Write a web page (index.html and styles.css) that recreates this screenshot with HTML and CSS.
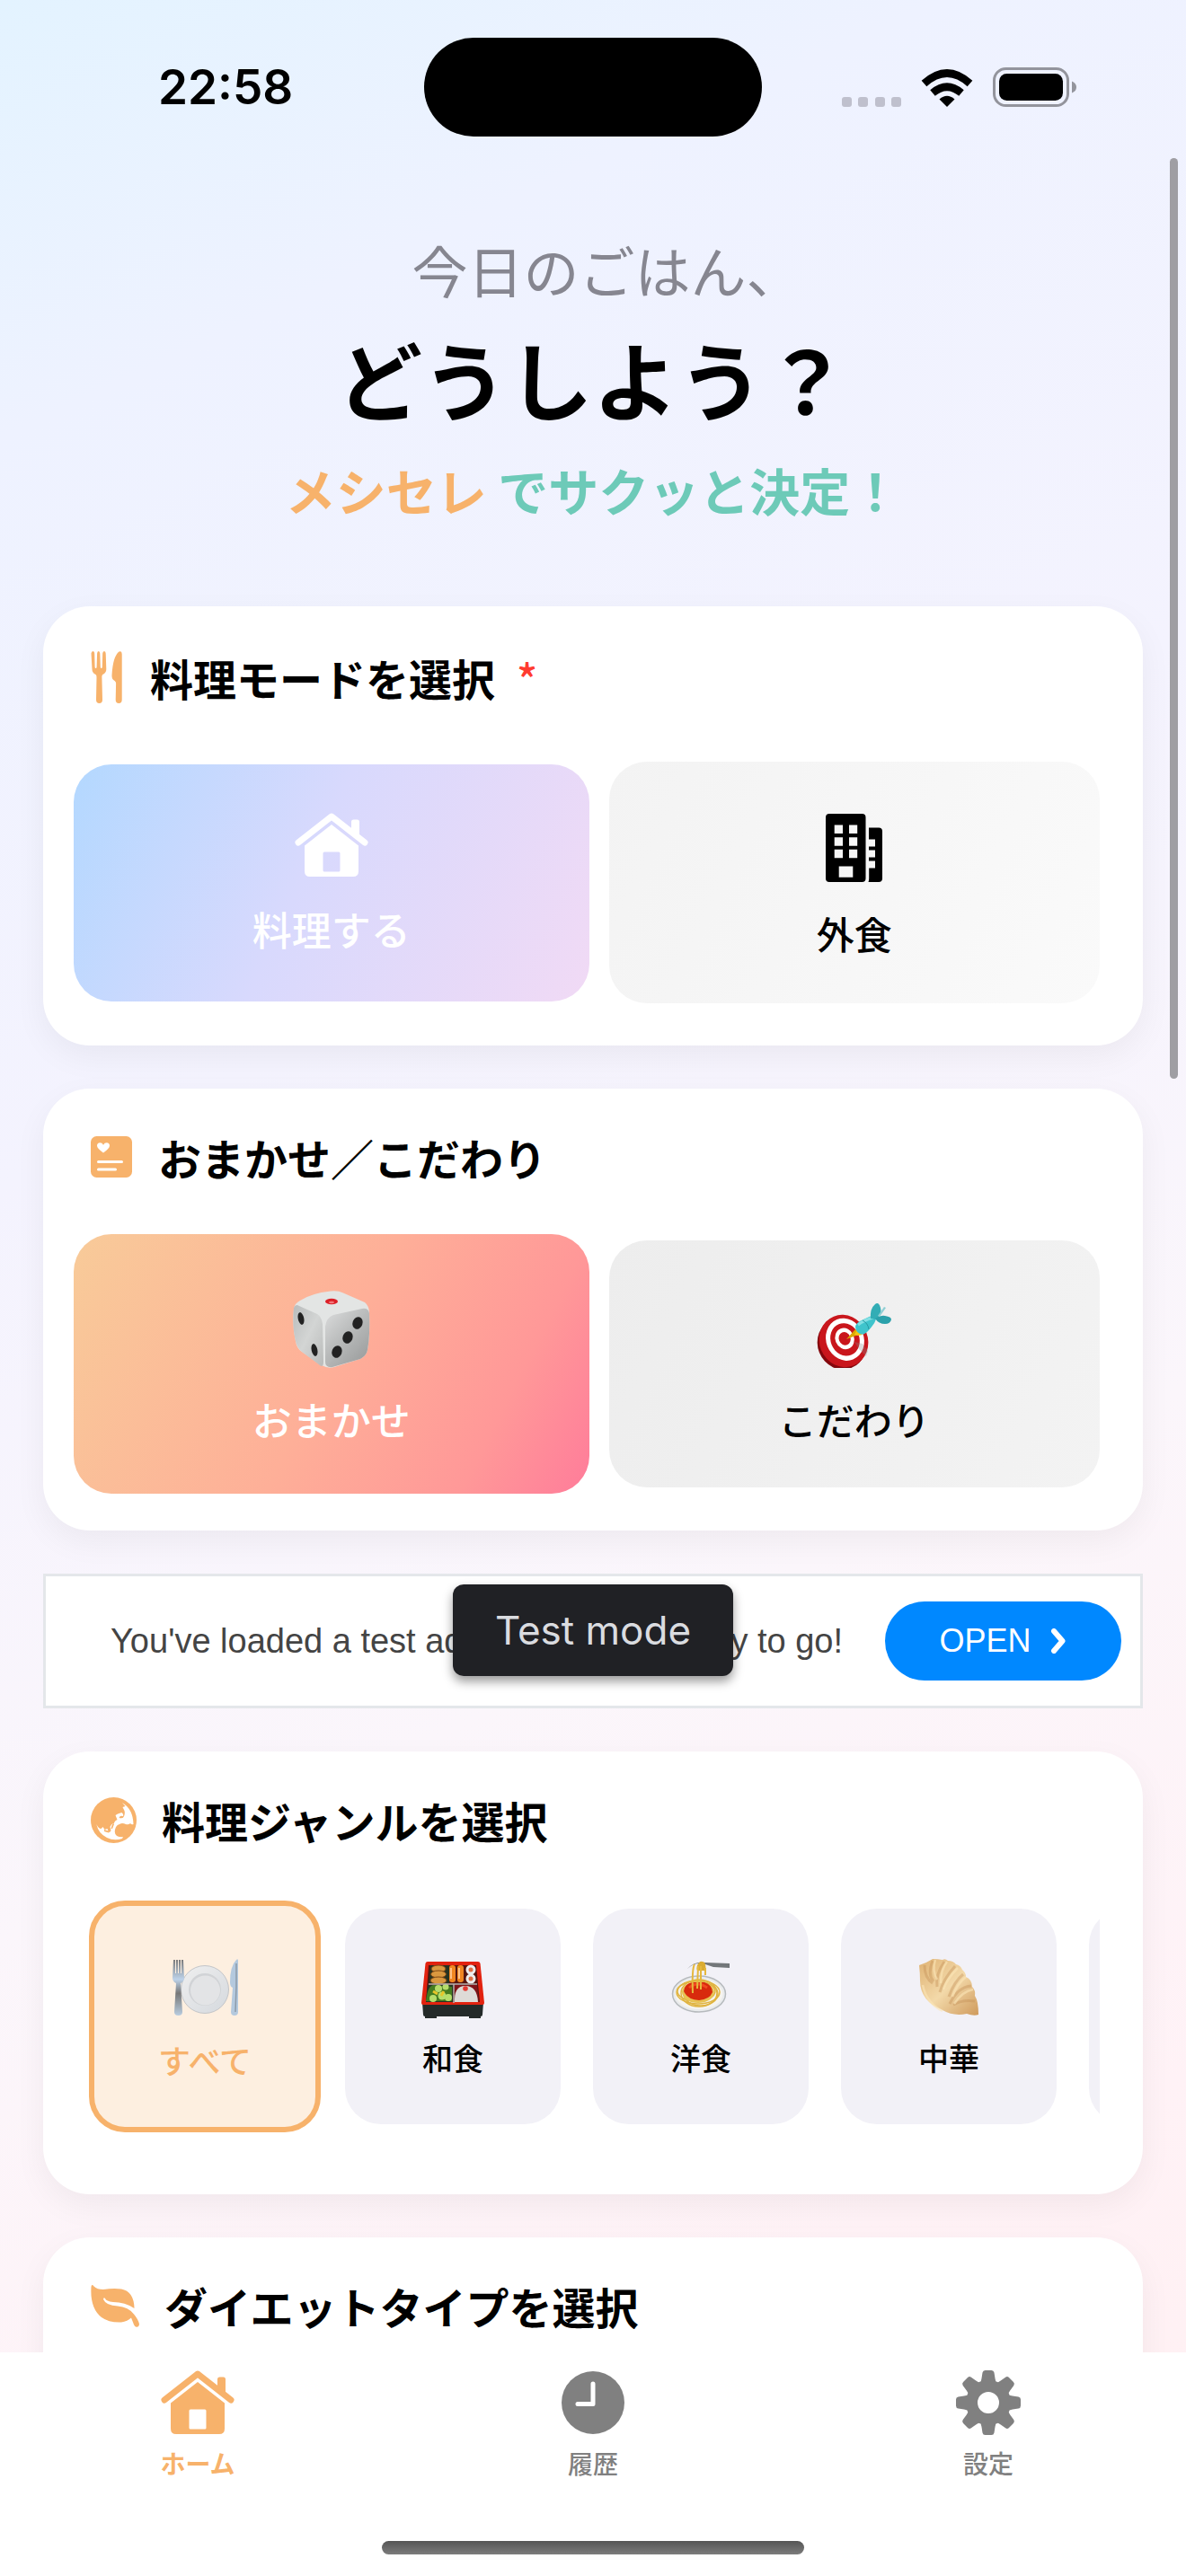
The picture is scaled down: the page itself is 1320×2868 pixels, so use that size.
FILE: index.html
```html
<!DOCTYPE html>
<html lang="ja">
<head>
<meta charset="utf-8">
<meta name="viewport" content="width=device-width, initial-scale=1">
<title>メシセレ</title>
<link rel="stylesheet" href="styles.css">
</head>
<body>
<svg class="defs" width="0" height="0" aria-hidden="true">
  <symbol id="house" viewBox="0 0 82 72">
    <path d="M4 33 L41 4 L78 33" fill="none" stroke="currentColor" stroke-width="7" stroke-linecap="round" stroke-linejoin="round"/>
    <path d="M63 20V10q0-2.500 2.500-2.500h4q2.500 0 2.500 2.500V27z" fill="currentColor"/>
    <path fill="currentColor" fill-rule="evenodd" d="M41 13 L71 36.500V65q0 6-6 6H17q-6 0-6-6V36.500zM33 43.500q-1.500 0-1.500 1.500v19q0 1.500 1.500 1.500h16q1.500 0 1.500-1.500V45q0-1.500-1.500-1.500z"/>
  </symbol>
</svg>

<div class="screen">
  <div class="status">
    <div class="status-time">22:58</div>
    <div class="island"></div>
    <div class="status-icons">
      <svg class="signal" width="66" height="11" viewBox="0 0 66 11"><g fill="#bfc0cd"><rect width="11" height="11" rx="3"/><rect x="18" width="11" height="11" rx="3"/><rect x="37" width="11" height="11" rx="3"/><rect x="55" width="11" height="11" rx="3"/></g></svg>
      <svg width="58" height="43" viewBox="0 0 58 43"><path d="M29 43l-8.500-8.500q8.500-7.500 17 0z"/><path d="M13 27.500q16-13.500 32 0M3.500 17Q29-6 54.500 17" fill="none" stroke="#000" stroke-width="8.500"/></svg>
      <svg width="94" height="44" viewBox="0 0 94 44"><rect x="1.500" y="1.500" width="82" height="41" rx="13" fill="none" stroke="#93949c" stroke-width="3"/><rect x="7" y="7" width="71" height="30" rx="8.500"/><path d="M88 15.500q5 2 5 6.500t-5 6.500z" fill="#93949c"/></svg>
    </div>
  </div>

  <main class="content">
    <header class="hero">
      <p class="hero-lead">今日のごはん<span class="half">、</span></p>
      <h1 class="hero-title">どうしよう？</h1>
      <p class="hero-sub"><span class="brand">メシセレ</span> でサクッと決定！</p>
    </header>

    <section class="card card-mode">
      <h2 class="card-head">
        <svg width="38" height="58" viewBox="0 0 38 58"><path fill="currentColor" d="M.5 2.500q.300-2.500 2-2.500t1.700 2.500l.400 15q.100 1.500 1 1.500t1-1.500l.500-15q.200-2.500 1.600-2.500t1.600 2.500l.500 15q.100 1.500 1 1.500t1-1.500l.400-15q.200-2.500 1.800-2.500t1.700 2.500l.600 17.500q0 4-4 6-1 .700-.9 3l.6 25q0 4-3.500 4t-3.500-4l.5-25q0-2.300-1-3-4-2-4-6zM31.500.5q3-1.500 3.200 3V54q0 4-3.500 4t-3.500-4l.4-18q0-2-1.500-3-3.300-1.500-3.100-6Q24.500 6 31.500.5z"/></svg>
        料理モードを選択<span class="required">*</span>
      </h2>
      <div class="choices">
        <button type="button" class="choice choice-cook" aria-pressed="true"><svg width="82" height="72"><use href="#house"/></svg>料理する</button>
        <button type="button" class="choice choice-out" aria-pressed="false">
          <svg width="63" height="76" viewBox="0 0 63 76"><path fill-rule="evenodd" d="M4 0h36.500q4 0 4 4v68q0 4-4 4H4q-4 0-4-4V4q0-4 4-4zM9.700 12.500v9.500H19v-9.500zM26 12.500v9.500h9.200v-9.500zM9.700 26.200v9.500H19v-9.500zM26 26.200v9.500h9.200v-9.500zM9.700 39.800v9.500H19v-9.500zM26 39.800v9.500h9.200v-9.500zM14.700 58.500v12.300h15.600V58.500z"/><path d="M48 15.500h11q4 0 4 4V72q0 4-4 4H47.500q.7-2 .7-4V60.500h6.800v-8h-7v-4h7v-8h-7v-4h7v-8h-7z"/></svg>外食</button>
      </div>
    </section>

    <section class="card">
      <h2 class="card-head">
        <svg width="47" height="46" viewBox="0 0 47 46"><rect width="46" height="46" rx="6.500" fill="currentColor"/><path fill="#fff" d="M14 18.500Q7 13.500 7 10.500 7 7.500 10.300 7.300 12.700 7.300 14 9.700q1.300-2.400 3.700-2.400 3.300.2 3.300 3.200 0 3-7 8z"/><path d="M8.500 28.500h26M8.500 37h19" stroke="#fff" stroke-width="3" stroke-linecap="round"/></svg>
        おまかせ／こだわり
      </h2>
      <div class="choices">
        <button type="button" class="choice choice-random" aria-pressed="true">
          <svg width="86" height="86" viewBox="0 0 86 86">
            <defs><linearGradient id="dl" x2="1" y2="1"><stop stop-color="#b9bcbc"/><stop offset=".5" stop-color="#d3d5d4"/><stop offset="1" stop-color="#b9bbba"/></linearGradient><linearGradient id="dr" x2=".8" y2="1"><stop stop-color="#dcdddd"/><stop offset=".5" stop-color="#b9bbbb"/><stop offset="1" stop-color="#9b9d9d"/></linearGradient></defs>
            <path fill="#e3e5e4" d="M8 11Q20 3 42 .5q8-1 14 2L80 13q5 4 5 12 1 25-2 41-1 6-8 10L46 85q-7 2-14-2L10 68q-6-4-7-12Q-1 40 1 20q1-6 7-9z"/>
            <path fill="url(#dl)" d="M1 19q2-5 6-2l20 9q5 3 6 11l1 42q0 7-4 4L10 68q-5-4-7-12Q-1 40 1 19z"/>
            <path fill="url(#dr)" d="M36 40q1-10 9-13l32-7q7-1 8 5 1 25-2 41-1 6-8 10L44 85q-8 1-8-6z"/>
            <ellipse cx="43" cy="12" rx="7" ry="3.200" fill="#dc2027"/><ellipse cx="43" cy="13" rx="3" ry="1.200" fill="#f3777a"/>
            <g fill="#222"><ellipse cx="9" cy="31" rx="3.300" ry="7" transform="rotate(-12 9 31)"/><ellipse cx="24" cy="66" rx="3.300" ry="7" transform="rotate(-12 24 66)"/><ellipse cx="72" cy="36" rx="5.500" ry="7" transform="rotate(20 72 36)"/><ellipse cx="61" cy="52" rx="5.500" ry="7" transform="rotate(20 61 52)"/><ellipse cx="49" cy="68" rx="5.500" ry="7" transform="rotate(20 49 68)"/></g>
          </svg>おまかせ</button>
        <button type="button" class="choice choice-picky" aria-pressed="false">
          <svg width="86" height="86" viewBox="0 0 86 86">
            <g transform="rotate(-22 31 56)"><ellipse cx="28" cy="58" rx="27" ry="29" fill="#83080d"/><ellipse cx="31" cy="56" rx="27" ry="29.500" fill="#c9161c"/><ellipse cx="33" cy="55" rx="21" ry="24" fill="#fff"/><ellipse cx="33" cy="55" rx="16" ry="18.500" fill="#c9161c"/><ellipse cx="33" cy="54" rx="10.500" ry="12" fill="#fff"/><ellipse cx="33" cy="54" rx="6.500" ry="7.500" fill="#c9161c"/></g>
            <path d="M43 57l9 2 6 8-2 6-8-8z" fill="#8b8b8b" opacity=".3"/>
            <path d="M34 54L44 43l6 5z" fill="#dba800"/><path d="M43 49l3-6 6 6-5 1z" fill="#f3c414"/>
            <path d="M44 40q1-5 9-8 7-4 14-5 1 6-4 12-5 7-9 9-2 1-5 0-5-3-5-8z" fill="#3fc4cc"/><path d="M47 38q8-6 17-8" stroke="#83e0e4" stroke-width="3" fill="none"/><path d="M52 33q6 3 7 10" stroke="#2798a3" stroke-width="1" fill="none"/>
            <path d="M61 31q-1-11 5-16 4-3 6 4 2 6-4 13z" fill="#32adb5"/><path d="M66 31q6-4 11-3 7 1 7 4-1 5-7 5-7 0-11-6z" fill="#2ba1ab"/>
            <path d="M69 28l7-10 2 1-7 10z" fill="#8fcfd4"/>
          </svg>こだわり</button>
      </div>
    </section>

    <aside class="ad">
      <p class="ad-text">You've loaded a test ad and you are ready to go!</p>
      <button type="button" class="ad-open">OPEN<svg width="20" height="28" viewBox="0 0 20 28"><path d="M5 3l9.500 11L5 25" fill="none" stroke="#fff" stroke-width="6" stroke-linejoin="round" stroke-linecap="round"/></svg></button>
      <span class="ad-badge">Test mode</span>
    </aside>

    <section class="card card-genre">
      <h2 class="card-head">
        <svg width="51" height="51" viewBox="0 0 51 51"><circle cx="25.500" cy="25.500" r="25.500" fill="currentColor"/><path fill="#fff" d="M35 6q12 7 12.500 24-2 1-3.500-1-2 2-5 1-4-2-7 0-4 1-5 6-1 5 2 7 4 2 7 1l-1 2q-9 3-17-1Q8 40 6.500 30q2 5 5 5l2-2 2 3 3-1 1 3q2 2 3-1l-1-4q2-5 4-3 1-4 4-5l-2-5q3-2 4-2l3-1q3 3 1 4-3-1-4 2 4 1 5-1 2-3 1-7l-2-4 3-1z"/><path fill="currentColor" d="M15 36l6 2-1 1.500-5-1.500zM24 30h2l-2 5h-1.500z"/></svg>
        料理ジャンルを選択
      </h2>
      <div class="genres">
        <button type="button" class="genre genre-on" aria-pressed="true">
          <svg width="73" height="72" viewBox="0 0 73 72">
            <defs><linearGradient id="metal" x2="0" y2="1"><stop stop-color="#7a7a7a"/><stop offset=".35" stop-color="#bed3ea"/><stop offset=".6" stop-color="#777"/><stop offset="1" stop-color="#b9cde0"/></linearGradient><linearGradient id="plate" x2="1" y2="1"><stop stop-color="#efefef"/><stop offset="1" stop-color="#d5d9de"/></linearGradient></defs>
            <circle cx="36" cy="38" r="26.500" fill="url(#plate)" stroke="#c3c5c8"/><circle cx="36" cy="38" r="18" fill="#d1d3d6"/><circle cx="36.500" cy="39" r="16.500" fill="#e3e4e6"/>
            <path fill="url(#metal)" d="M1 5h2v15h1V5h2v15h1V5h2v15h1V5h2l1 20q0 4-4 6l2 32q0 4-4.500 4T2 63l2-32q-4-2-4-6z"/>
            <path fill="#b4c9de" d="M71 5q2-2 2 1v57q0 4-4 4t-4-4l2-27q-3-1-3-6 0-18 7-25z"/><path d="M71 9v26l-1 28" stroke="#8d9aa8" stroke-width="1.500" fill="none"/>
          </svg>すべて</button>
        <button type="button" class="genre" aria-pressed="false">
          <svg width="70" height="72" viewBox="0 0 70 72">
            <path d="M1 50h68l-1 14q0 2-2 2v2H53v-2H17v2H4v-2q-2 0-2-2z" fill="#242a29"/>
            <path d="M7 5h56q2 0 2.500 2L70 51q0 2-2 2H2q-2 0-2-2L4.500 7Q5 5 7 5z" fill="#e2220f"/>
            <path d="M8 9h53l4 41H5z" fill="#55150f"/><path d="M10 9h21v20H8zM7 31h28v19H5z" fill="#263321"/><path d="M37 31h25l2 19H37z" fill="#7e1519"/>
            <g fill="#d9983f" stroke="#7e4816"><ellipse cx="19" cy="13" rx="8" ry="4"/><ellipse cx="19" cy="19" rx="8.500" ry="4"/><ellipse cx="19" cy="26" rx="9" ry="4"/></g>
            <rect x="31" y="9" width="7" height="19" rx="3" fill="#f08521"/><rect x="40" y="9" width="7" height="19" rx="3" fill="#f08521"/><path d="M33 12v12M42 12v12" stroke="#ffc187" stroke-width="2"/>
            <g><circle cx="55" cy="14" r="5.500" fill="#eee"/><circle cx="55" cy="24" r="5.500" fill="#eee"/><circle cx="55" cy="14" r="2.500" fill="#df6f45"/><circle cx="55" cy="24" r="2.500" fill="#df6f45"/></g>
            <path d="M5 49q2-18 9-18l20 2v16z" fill="#447b20"/><g fill="#b6dd6b"><circle cx="19" cy="35" r="4"/><circle cx="27" cy="33" r="3.500"/><circle cx="13" cy="46" r="4"/><circle cx="23" cy="43" r="4.500"/><circle cx="30" cy="45" r="4"/></g><path d="M13 38l5 3M25 38l-3 5" stroke="#e7c529" stroke-width="3"/>
            <path d="M37 50q-1-18 12-18t14 18z" fill="#dedbd7"/><circle cx="49" cy="35" r="2.800" fill="#e23a32"/><path d="M36 30v21M8 30h54" stroke="#b8b4b2" stroke-width="1.500"/>
          </svg>和食</button>
        <button type="button" class="genre" aria-pressed="false">
          <svg width="66" height="72" viewBox="0 0 66 72">
            <ellipse cx="31" cy="41" rx="29.500" ry="20" fill="#e9ebed" stroke="#b6babd" stroke-width="1.500"/><ellipse cx="31" cy="41" rx="26.500" ry="17" fill="#f6f4ef"/>
            <g fill="none" stroke="#e0b440" stroke-width="1.500"><ellipse cx="30" cy="39" rx="24" ry="13"/><ellipse cx="31" cy="40" rx="20" ry="15"/><ellipse cx="28" cy="38" rx="21" ry="11"/><ellipse cx="33" cy="41" rx="19" ry="13"/></g><ellipse cx="30" cy="39" rx="18" ry="12" fill="#e8c254"/>
            <path d="M14 38q1-9 10-10h13q9 3 9 11-3 8-15 9-13-1-17-10z" fill="#d82a0d"/><path d="M20 34q9-8 20 0" stroke="#f14b21" stroke-width="3" fill="none"/>
            <path d="M38 8Q28 4 18 13q8-9 20-7l27 1v5l-18-1z" fill="#73777a"/><path d="M32 5q8-2 6 10h-9q-2-5 3-10z" fill="#dbac32"/><path d="M26 8q-3 5-2 32M30 10l-1 25M33 10v26M38 12v8" stroke="#e5b83e" stroke-width="2" fill="none"/>
          </svg>洋食</button>
        <button type="button" class="genre" aria-pressed="false">
          <svg width="66" height="72" viewBox="0 0 66 72">
            <defs><linearGradient id="dough" x2="1" y2="1"><stop stop-color="#dfb273"/><stop offset=".5" stop-color="#f3d9a9"/><stop offset="1" stop-color="#cf9a5c"/></linearGradient></defs>
            <path fill="url(#dough)" d="M0 9Q9 6 15 2q6 0 11 1 3-2 6 1 6 0 9 4 5 1 7 6 4 3 4 8 7 3 7 11 4 4 3 10 4 6 4 21-5 2-13-1-15 3-27-4Q1 49 1 26 1 18 0 9z"/>
            <path d="M6 9q0 14 9 20M15 4q-6 15 1 23M28 5q-10 14-8 28M40 10Q27 24 23 39M49 19Q39 27 33 44M58 32q-15 1-24 20M62 49q-14-2-24 4" fill="none" stroke="#c48f55" stroke-width="3" opacity=".4"/>
            <path d="M18 3q-4 12 2 22M31 5q-7 9-7 24M43 12Q31 24 27 36M52 22Q42 30 37 44M60 36Q48 38 39 52M4 31q4 20 22 29" fill="none" stroke="#fbe6b8" stroke-width="2.500" opacity=".6"/>
          </svg>中華</button>
        <div class="genre"></div>
      </div>
    </section>

    <section class="card card-diet">
      <h2 class="card-head">
        <svg width="54" height="47" viewBox="0 0 54 47"><path fill="currentColor" d="M.500 2Q1-1.500 3.500 1.500 7 5 14 5 25 3.500 34 4.500 48 7 48.500 26 38 19 25 19 17 18 16 15 14.500 13 14 16q3 7 16 7.500 12 1 18 9 5 6 6 11-.500 4-4 3-1.500-.500-3-5l-2-5q-4 4-11 5Q20 42 12 36-1 26 .500 2z"/></svg>
        ダイエットタイプを選択
      </h2>
    </section>
    <div class="scroll-thumb"></div>
  </main>

  <nav class="tabs">
    <div class="tab-row">
      <a class="tab tab-on" href="#home" aria-current="page"><svg width="82" height="72"><use href="#house"/></svg>ホーム</a>
      <a class="tab" href="#history"><svg width="70" height="72" viewBox="0 0 70 72"><circle cx="35" cy="36" r="35" fill="currentColor"/><path d="M35 15v22.500H18" fill="none" stroke="#fff" stroke-width="5" stroke-linecap="round" stroke-linejoin="round"/></svg>履歴</a>
      <a class="tab" href="#settings"><svg width="72" height="72" viewBox="0 0 72 72"><defs><path id="tooth" d="M26 16q2-3 2.500-7l1-6.500Q30 0 32.500 0h7q2.500 0 3 2.500l1 6.500q.5 4 2.500 7z"/></defs><g fill="currentColor"><use href="#tooth"/><use href="#tooth" transform="rotate(45 36 36)"/><use href="#tooth" transform="rotate(90 36 36)"/><use href="#tooth" transform="rotate(135 36 36)"/><use href="#tooth" transform="rotate(180 36 36)"/><use href="#tooth" transform="rotate(225 36 36)"/><use href="#tooth" transform="rotate(270 36 36)"/><use href="#tooth" transform="rotate(315 36 36)"/></g><circle cx="36" cy="36" r="18.500" fill="none" stroke="currentColor" stroke-width="13"/></svg>設定</a>
    </div>
    <div class="home-bar"></div>
  </nav>
</div>
</body>
</html>
```
FILE: styles.css
```css
:root {
  --orange: #f7b26b;
  --teal: #6dcab8;
  --grey: #808080;
}

* {
  box-sizing: border-box;
}

body {
  margin: 0;
  color: #000;
  font-family: "Noto Sans CJK JP", sans-serif;
}

h1, h2, p {
  margin: 0;
}

button {
  border: 0;
  font: inherit;
  color: inherit;
  cursor: pointer;
}

svg {
  display: block;
  flex: none;
}

.defs {
  position: absolute;
}

.screen {
  display: flex;
  flex-direction: column;
  height: 100vh;
  background: linear-gradient(155deg, #e3f3ff 0%, #eef2ff 14%, #f4f3fe 38%, #fbf6fb 62%, #fff2f6 84%, #fff0f2 100%);
}

/* Status bar */
.status {
  display: grid;
  grid-template-columns: 1fr 376px 1fr;
  align-items: center;
  padding: 42px 0 24px;
}

.status-time {
  padding-left: 176px;
  font: 600 53px/64px Inter, sans-serif;
}

.island {
  height: 110px;
  border-radius: 55px;
  background: #000;
}

.status-icons {
  display: flex;
  align-items: center;
  justify-content: flex-end;
  gap: 22px;
  padding-right: 121px;
}

.signal {
  align-self: flex-end;
}

/* Scrolling content */
.content {
  position: relative;
  flex: 1;
  min-height: 0;
  padding: 0 48px;
  overflow-y: auto;
  scrollbar-width: none;
}

.scroll-thumb {
  position: absolute;
  top: 0;
  right: 9px;
  width: 9px;
  height: 1025px;
  border-radius: 5px;
  background: #9f9ea3;
}

.hero {
  display: flex;
  flex-direction: column;
  align-items: center;
  padding: 82px 0 92px;
  text-align: center;
}

.hero-lead {
  color: #868690;
  font-size: 62px;
  line-height: 84px;
}

.half {
  font-feature-settings: "halt";
}

.hero-title {
  margin: 19px 0 26px;
  font-size: 95px;
  font-weight: 700;
  line-height: 120px;
}

.hero-sub {
  color: var(--teal);
  font-size: 56px;
  font-weight: 700;
  line-height: 76px;
}

.brand {
  color: var(--orange);
}

/* Cards */
.card {
  margin-bottom: 48px;
  padding: 42px 48px 41px 34px;
  border-radius: 52px;
  background: #fff;
  box-shadow: 0 12px 36px rgba(0, 0, 0, 0.05);
}

.card-head {
  display: flex;
  align-items: center;
  gap: 28px;
  height: 68px;
  margin: 0 0 52px 19px;
  font-size: 48px;
  font-weight: 700;
  line-height: 68px;
}

.card-head svg {
  color: var(--orange);
}

.required {
  margin-left: -4px;
  color: #ff3b30;
  font-weight: 500;
}

.choices {
  display: grid;
  grid-template-columns: 573fr 546fr;
  align-items: center;
  gap: 22px;
}

.choice {
  display: flex;
  flex-direction: column;
  align-items: center;
  justify-content: center;
  gap: 30px;
  height: 275px;
  padding: 6px 0 0;
  border-radius: 42px;
  font-size: 42px;
  font-weight: 500;
  line-height: 54px;
}

.choice[aria-pressed="true"] {
  color: #fff;
  font-size: 44px;
}

.card-mode .card-head {
  height: 73px;
}

.card-mode .choices {
  min-height: 281px;
}

.choice-cook {
  height: 264px;
  padding: 0;
  background: linear-gradient(115deg, #b3d8ff 0%, #d8d9fd 45%, #f1daf5 100%);
}

.choice-out {
  height: 269px;
  background: linear-gradient(116deg, #f3f3f3, #fafafa);
}

.choice-random {
  height: 289px;
  background: linear-gradient(117deg, #f8cb99 0%, #feaf98 50%, #ff9898 80%, #ff7c9a 100%);
}

.choice-picky {
  background: linear-gradient(117deg, #ededed, #f3f3f3);
}

/* Ad banner */
.ad {
  position: relative;
  display: flex;
  align-items: center;
  justify-content: space-between;
  height: 150px;
  margin-bottom: 48px;
  padding: 0 21px 0 72px;
  border: 3px solid #e4e7ea;
  background: #fff;
  font-family: "Liberation Sans", Arial, sans-serif;
}

.ad-text {
  color: #444;
  font-size: 38px;
  line-height: 48px;
  white-space: nowrap;
}

.ad-open {
  display: flex;
  align-items: center;
  justify-content: center;
  gap: 20px;
  width: 263px;
  height: 88px;
  padding: 0;
  border-radius: 44px;
  background: #08f;
  color: #fff;
  font-size: 36px;
}

.ad-badge {
  position: absolute;
  top: 9px;
  left: 50%;
  width: 312px;
  margin-left: -156px;
  border-radius: 12px;
  background: #202125;
  box-shadow: 0 6px 12px rgba(0, 0, 0, 0.4);
  color: #dadce0;
  font: 400 44px/102px Inter, sans-serif;
  text-align: center;
}

/* Genre chips */
.card-genre {
  padding-bottom: 65px;
}

.genres {
  display: flex;
  align-items: center;
  gap: 36px;
  margin-left: 14px;
  padding: 4px 0 4px 3px;
  overflow: hidden;
}

.genre {
  display: flex;
  flex: none;
  flex-direction: column;
  align-items: center;
  justify-content: center;
  gap: 20px;
  width: 240px;
  height: 240px;
  padding: 0;
  border-radius: 40px;
  background: #f2f1f7;
  font-size: 34px;
  font-weight: 500;
  line-height: 40px;
}

.genre-on {
  gap: 24px;
  width: 258px;
  height: 258px;
  margin-right: -9px;
  border: 6px solid var(--orange);
  background: #fdefe0;
  color: var(--orange);
  font-size: 36px;
}

.card-diet .card-head {
  margin-bottom: 300px;
}

/* Tab bar */
.tabs {
  position: relative;
  padding: 20px 0 24px;
  background: #fff;
}

.tab-row {
  display: grid;
  grid-template-columns: repeat(3, 1fr);
}

.tab {
  display: flex;
  flex-direction: column;
  align-items: center;
  gap: 13px;
  color: var(--grey);
  font-size: 28px;
  font-weight: 500;
  line-height: 36px;
  text-decoration: none;
}

.tab-on {
  color: var(--orange);
  font-weight: 700;
}

.home-bar {
  width: 470px;
  height: 15px;
  margin: 69px auto 0;
  border-radius: 8px;
  background: linear-gradient(#555, #7c7c7c);
}
```
